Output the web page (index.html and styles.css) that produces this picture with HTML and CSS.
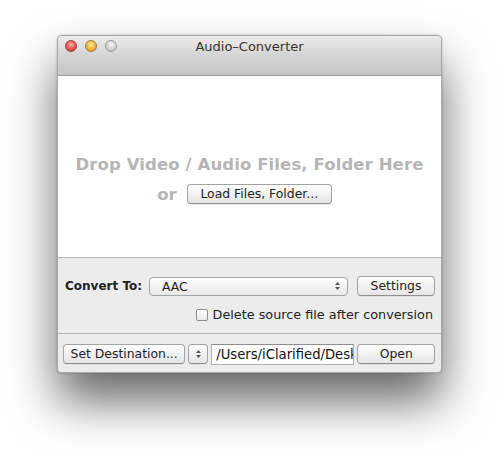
FILE: index.html
```html
<!DOCTYPE html>
<html>
<head>
<meta charset="utf-8">
<link rel="stylesheet" href="styles.css">
</head>
<body>
<div class="window">
  <div class="titlebar">
    <div class="lights">
      <span class="light red"></span>
      <span class="light yellow"></span>
      <span class="light gray"></span>
    </div>
    <div class="title">Audio–Converter</div>
  </div>
  <div class="drop">
    <div class="drop-text">Drop Video / Audio Files, Folder Here</div>
    <div class="drop-row"><span class="or">or</span><button class="btn load">Load Files, Folder...</button></div>
  </div>
  <div class="controls">
    <div class="row convert">
      <span class="label">Convert To:</span>
      <div class="popup"><span>AAC</span>
        <svg class="arrows" width="7" height="10" viewBox="0 0 7 10"><path d="M1 4 L3.5 1 L6 4 Z M1 6 L3.5 9 L6 6 Z" fill="#555"/></svg>
      </div>
      <button class="btn settings">Settings</button>
    </div>
    <div class="row check">
      <span class="checkbox"></span><span class="check-label">Delete source file after conversion</span>
    </div>
  </div>
  <div class="bottom">
    <button class="btn dest">Set Destination...</button>
    <button class="btn stepper"><svg width="7" height="10" viewBox="0 0 7 10"><path d="M1 4 L3.5 1 L6 4 Z M1 6 L3.5 9 L6 6 Z" fill="#555"/></svg></button>
    <div class="path">/Users/iClarified/Desktop</div>
    <button class="btn open">Open</button>
  </div>
</div>
</body>
</html>
```
FILE: styles.css
```css
html, body {
  margin: 0;
  padding: 0;
  background: #ffffff;
}
body {
  min-height: 453px;
  box-sizing: border-box;
  padding-top: 35px;
  padding-left: 57px;
  font-family: "DejaVu Sans", "Liberation Sans", sans-serif;
  font-size: 12.4px;
  color: #222;
}
.window {
  width: 385px;
  height: 338px;
  box-sizing: border-box;
  border: 1px solid #a8a8a8;
  border-radius: 5px 5px 4px 4px;
  background: #ececec;
  box-shadow: 0 28px 48px rgba(0,0,0,0.6), 0 0 2px rgba(0,0,0,0.3);
  overflow: hidden;
  display: flex;
  flex-direction: column;
}
.titlebar {
  height: 39px;
  flex: none;
  background: linear-gradient(#ececec, #d4d4d4 50%, #c5c5c5);
  border-bottom: 1px solid #9c9c9c;
  position: relative;
  display: flex;
  justify-content: center;
}
.lights {
  position: absolute;
  left: 7px;
  top: 4px;
  display: flex;
  gap: 8px;
}
.light {
  width: 12px;
  height: 12px;
  border-radius: 50%;
  box-sizing: border-box;
}
.light.red {
  background: radial-gradient(circle at 50% 35%, #ffb3b0 0, #f4615a 45%, #c2322c 100%);
  border: 1px solid #a2403a;
}
.light.yellow {
  background: radial-gradient(circle at 50% 35%, #ffe7a6 0, #f2bd46 45%, #c48a1f 100%);
  border: 1px solid #a67a2a;
}
.light.gray {
  background: radial-gradient(circle at 50% 35%, #f4f4f4 0, #d8d8d8 50%, #b0b0b0 100%);
  border: 1px solid #9a9a9a;
}
.title {
  margin-top: 3px;
  font-size: 13px;
  color: #333;
  height: 16px;
  line-height: 16px;
}
.drop {
  height: 182px;
  flex: none;
  background: #ffffff;
  border-bottom: 1px solid #b8b8b8;
  display: flex;
  flex-direction: column;
  align-items: center;
  padding-top: 79px;
  box-sizing: border-box;
}
.drop-text {
  font-size: 16.5px;
  font-weight: bold;
  color: #b5b5b5;
  line-height: 20px;
  letter-spacing: 0.1px;
}
.drop-row {
  display: flex;
  align-items: center;
  gap: 10px;
  margin-top: 9px;
  margin-right: 10px;
}
.or {
  font-size: 16.5px;
  font-weight: bold;
  color: #b5b5b5;
}
.btn {
  font-family: inherit;
  font-size: 12.4px;
  color: #222;
  background: linear-gradient(#ffffff, #f1f1f1 50%, #e6e6e6);
  border: 1px solid #a3a3a3;
  border-bottom-color: #8e8e8e;
  border-radius: 4px;
  height: 20px;
  padding: 0 10px;
  box-shadow: 0 1px 0 rgba(0,0,0,0.05);
  line-height: 18px;
  margin: 0;
}
.load {
  width: 145px;
  padding: 0;
}
.controls {
  flex: none;
  height: 76px;
  box-sizing: border-box;
  padding: 18px 6px 0 7px;
  border-bottom: 1px solid #b4b4b4;
}
.row {
  display: flex;
  align-items: center;
}
.label {
  font-weight: bold;
  width: 84px;
  flex: none;
  font-size: 12px;
}
.popup {
  width: 201px;
  height: 19px;
  box-sizing: border-box;
  border: 1px solid #a5a5a5;
  border-radius: 4px;
  background: linear-gradient(#ffffff, #f3f3f3 50%, #e9e9e9);
  display: flex;
  align-items: center;
  justify-content: space-between;
  padding: 0 6px 0 12px;
}
.settings {
  margin-left: 9px;
  width: 79px;
  padding: 0;
}
.check {
  justify-content: flex-end;
  margin-top: 11px;
  padding-right: 2px;
}
.checkbox {
  width: 12px;
  height: 12px;
  box-sizing: border-box;
  border: 1px solid #8f8f8f;
  border-radius: 2px;
  background: linear-gradient(#ffffff, #eaeaea);
  margin-right: 5px;
}
.check-label {
  font-size: 12.8px;
}
.bottom {
  flex: 1;
  display: flex;
  align-items: flex-start;
  padding: 10px 6px 0 5px;
}
.dest {
  width: 123px;
  padding: 0;
}
.stepper {
  width: 20px;
  padding: 0;
  margin-left: 3px;
  display: flex;
  align-items: center;
  justify-content: center;
}
.path {
  margin-left: 3px;
  width: 144px;
  height: 21px;
  box-sizing: border-box;
  border: 1px solid #b0b0b0;
  border-top-color: #8e8e8e;
  background: #fff;
  padding: 0 0 0 4px;
  line-height: 19px;
  white-space: nowrap;
  overflow: hidden;
  font-size: 13.2px;
  color: #111;
}
.open {
  margin-left: 3px;
  width: 78px;
  padding: 0;
}
```
